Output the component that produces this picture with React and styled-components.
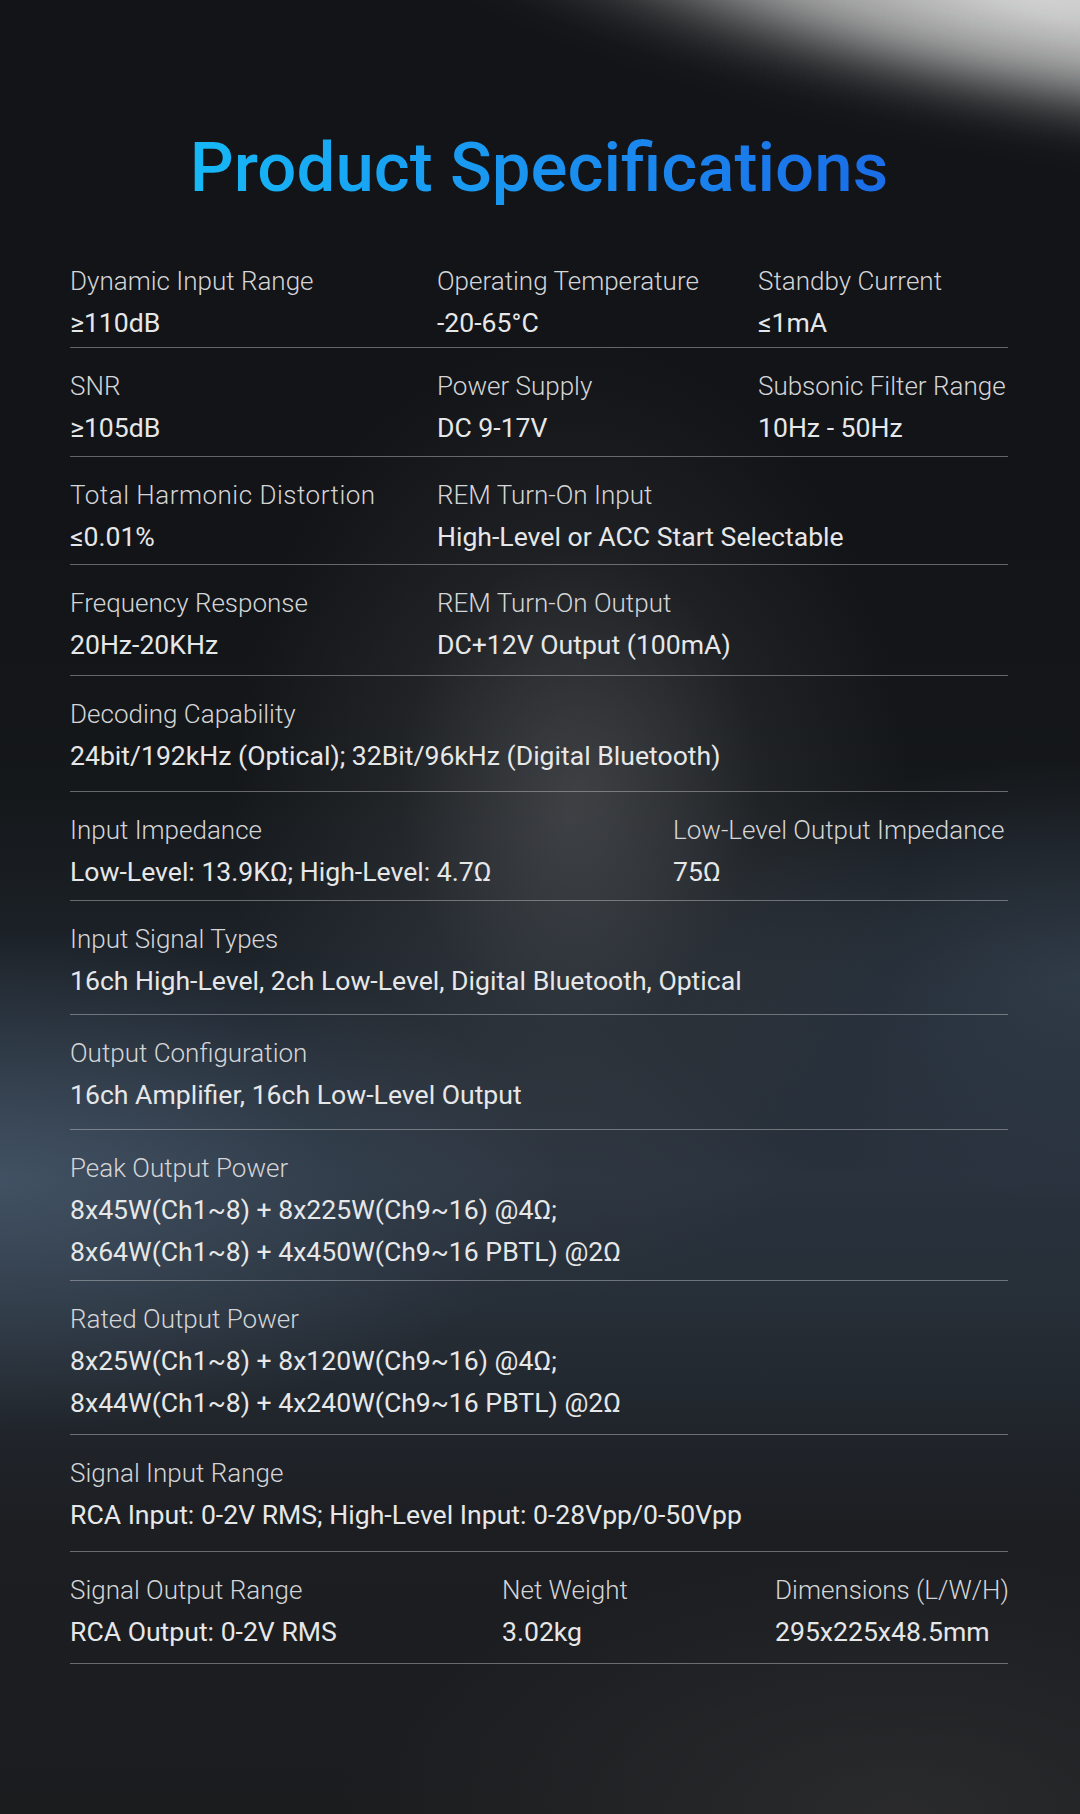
import React from "react";
import styled, { createGlobalStyle } from "styled-components";

const GlobalStyle = createGlobalStyle`
  html, body {
    margin: 0;
    padding: 0;
    background: #121417;
  }
  * { box-sizing: border-box; }
`;

// pad = bottom padding of the row, the rows are not all spaced the same
const specs = [
  {
    cols: "367px 321px 1fr",
    pad: 3,
    items: [
      ["Dynamic Input Range", ["≥110dB"]],
      ["Operating Temperature", ["-20-65°C"]],
      ["Standby Current", ["≤1mA"]],
    ],
  },
  {
    cols: "367px 321px 1fr",
    pad: 7,
    items: [
      ["SNR", ["≥105dB"]],
      ["Power Supply", ["DC 9-17V"]],
      ["Subsonic Filter Range", ["10Hz - 50Hz"]],
    ],
  },
  {
    cols: "367px 1fr",
    pad: 6,
    items: [
      ["Total Harmonic Distortion", ["≤0.01%"], true],
      ["REM Turn-On Input", ["High-Level or ACC Start Selectable"]],
    ],
  },
  {
    cols: "367px 1fr",
    pad: 9,
    items: [
      ["Frequency Response", ["20Hz-20KHz"]],
      ["REM Turn-On Output", ["DC+12V Output (100mA)"]],
    ],
  },
  {
    cols: "1fr",
    pad: 14,
    items: [
      ["Decoding Capability", ["24bit/192kHz (Optical); 32Bit/96kHz (Digital Bluetooth)"]],
    ],
  },
  {
    cols: "603px 1fr",
    pad: 7,
    items: [
      ["Input Impedance", ["Low-Level: 13.9KΩ; High-Level: 4.7Ω"]],
      ["Low-Level Output Impedance", ["75Ω"]],
    ],
  },
  {
    cols: "1fr",
    pad: 12,
    items: [
      ["Input Signal Types", ["16ch High-Level, 2ch Low-Level, Digital Bluetooth, Optical"]],
    ],
  },
  {
    cols: "1fr",
    pad: 13,
    items: [["Output Configuration", ["16ch Amplifier, 16ch Low-Level Output"]]],
  },
  {
    cols: "1fr",
    pad: 7,
    items: [
      [
        "Peak Output Power",
        ["8x45W(Ch1~8) + 8x225W(Ch9~16) @4Ω;", "8x64W(Ch1~8) + 4x450W(Ch9~16 PBTL) @2Ω"],
      ],
    ],
  },
  {
    cols: "1fr",
    pad: 10,
    items: [
      [
        "Rated Output Power",
        ["8x25W(Ch1~8) + 8x120W(Ch9~16) @4Ω;", "8x44W(Ch1~8) + 4x240W(Ch9~16 PBTL) @2Ω"],
      ],
    ],
  },
  {
    cols: "1fr",
    pad: 15,
    items: [["Signal Input Range", ["RCA Input: 0-2V RMS; High-Level Input: 0-28Vpp/0-50Vpp"]]],
  },
  {
    cols: "432px 273px 1fr",
    pad: 10,
    items: [
      ["Signal Output Range", ["RCA Output: 0-2V RMS"]],
      ["Net Weight", ["3.02kg"]],
      ["Dimensions (L/W/H)", ["295x225x48.5mm"]],
    ],
  },
];

function App() {
  return (
    <Page>
      <GlobalStyle />
      <Title>Product Specifications</Title>
      <Table>
        {specs.map((row, i) => (
          <Row key={i} $cols={row.cols} $pad={row.pad}>
            {row.items.map(([label, values, wide]) => (
              <Cell key={label}>
                <Label $wide={wide}>{label}</Label>
                {values.map((v) => (
                  <Value key={v}>{v}</Value>
                ))}
              </Cell>
            ))}
          </Row>
        ))}
      </Table>
    </Page>
  );
}

const Page = styled.div`
  position: relative;
  overflow: hidden;
  width: 1080px;
  min-height: 1814px;
  padding: 126px 72px 0 70px;
  font-family: Roboto, "Liberation Sans", sans-serif;
  background:
    radial-gradient(ellipse 180px 240px at 580px 790px, rgba(110, 112, 116, 0.25), rgba(110, 112, 116, 0) 100%),
    radial-gradient(ellipse 340px 480px at 570px 820px, rgba(105, 108, 113, 0.3), rgba(105, 108, 113, 0) 100%),
    radial-gradient(ellipse 560px 250px at 0px 1180px, rgba(80, 100, 122, 0.62), rgba(80, 100, 122, 0) 100%),
    radial-gradient(ellipse 420px 220px at 1080px 980px, rgba(66, 82, 100, 0.5), rgba(66, 82, 100, 0) 100%),
    radial-gradient(ellipse 560px 260px at 900px 1814px, rgba(52, 52, 54, 0.6), rgba(52, 52, 54, 0) 100%),
    linear-gradient(
      180deg,
      #121417 0%,
      #121417 30%,
      #15181b 44%,
      #1f262e 56%,
      #29323d 65%,
      #262e37 72%,
      #1c1e22 84%,
      #1b1c1e 100%
    );

  &::before {
    content: "";
    position: absolute;
    left: 380px;
    top: -160px;
    width: 1150px;
    height: 280px;
    background: radial-gradient(
      ellipse at 58% 50%,
      rgba(228, 228, 228, 0.97) 0%,
      rgba(185, 185, 185, 0.8) 35%,
      rgba(100, 100, 100, 0.35) 58%,
      rgba(20, 20, 20, 0) 74%
    );
    transform: rotate(10deg);
    filter: blur(16px);
    pointer-events: none;
  }
`;

const Title = styled.h1`
  position: relative;
  margin: 0 auto;
  width: fit-content;
  text-align: center;
  font-size: 69px;
  line-height: 84px;
  font-weight: 500;
  background: linear-gradient(90deg, #16b8f6 0%, #1a92f0 50%, #1a6de8 100%);
  -webkit-background-clip: text;
  background-clip: text;
  color: transparent;
`;

const Table = styled.div`
  position: relative;
  margin-top: 33px;
  display: flex;
  flex-direction: column;
`;

const Row = styled.div`
  display: grid;
  grid-template-columns: ${(p) => p.$cols};
  padding: 17px 0 ${(p) => p.$pad}px;
  border-bottom: 1px solid rgba(200, 202, 206, 0.45);
`;

const Cell = styled.div`
  display: flex;
  flex-direction: column;
  min-width: 0;
`;

const Label = styled.div`
  font-size: 26px;
  line-height: 42px;
  font-weight: 300;
  letter-spacing: ${(p) => (p.$wide ? "0.5px" : "0")};
  color: #d4d5d7;
  white-space: nowrap;
`;

const Value = styled.div`
  font-size: 26.6px;
  line-height: 42px;
  font-weight: 400;
  color: #e6e7e8;
  white-space: nowrap;
`;

export default App;
